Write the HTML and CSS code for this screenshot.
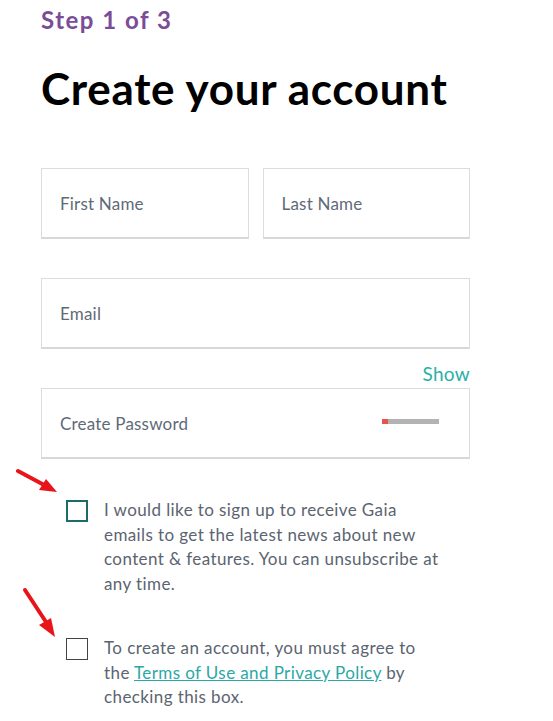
FILE: index.html
```html
<!DOCTYPE html>
<html>
<head>
<meta charset="utf-8">
<link rel="stylesheet" href="styles.css">
</head>
<body>
<div class="page">
  <div class="step">Step 1 of 3</div>
  <h1 class="title">Create your account</h1>
  <div class="row">
    <div class="field"><span class="ph">First Name</span></div>
    <div class="field"><span class="ph">Last Name</span></div>
  </div>
  <div class="field email"><span class="ph">Email</span></div>
  <div class="show">Show</div>
  <div class="field pass">
    <span class="ph">Create Password</span>
    <span class="meter"><span class="meter-fill"></span></span>
  </div>
  <div class="check-row first">
    <span class="box teal"></span>
    <p class="check-text">I would like to sign up to receive Gaia emails to get the latest news about new content &amp; features. You can unsubscribe at any time.</p>
    <svg class="arrow arrow1" width="50" height="40" viewBox="0 0 50 40"><line x1="2" y1="3" x2="30" y2="18" stroke="#e8141a" stroke-width="4" stroke-linecap="round"/><polygon points="41,24 23,22 30,11" fill="#e8141a"/></svg>
  </div>
  <div class="check-row second">
    <span class="box"></span>
    <p class="check-text">To create an account, you must agree to the <a class="link" href="#">Terms of Use and Privacy Policy</a> by checking this box.</p>
    <svg class="arrow arrow2" width="40" height="55" viewBox="0 0 40 55"><line x1="3" y1="3" x2="24" y2="35" stroke="#e8141a" stroke-width="4" stroke-linecap="round"/><polygon points="33,50 17,38 29,31" fill="#e8141a"/></svg>
  </div>
</div>
</body>
</html>
```
FILE: styles.css
```css
html, body {
  margin: 0;
  padding: 0;
  background: #fff;
}
body {
  font-family: Lato, "Open Sans", sans-serif;
}
.page {
  width: 429px;
  padding: 6px 0 0 41px;
}
.step {
  font-size: 24px;
  font-weight: 700;
  color: #7b4c97;
  line-height: 28px;
  letter-spacing: 1.5px;
}
.title {
  margin: 28px 0 0;
  font-size: 44px;
  font-weight: 700;
  color: #000;
  line-height: 52px;
  letter-spacing: 0.7px;
}
.row {
  display: flex;
  gap: 14px;
  margin-top: 54px;
}
.row .field {
  flex: 1;
}
.field {
  box-sizing: border-box;
  height: 71px;
  border: 1px solid #dcdcdc;
  border-bottom: 2px solid #d6d8dc;
  display: flex;
  align-items: center;
  padding: 0 18px;
  background: #fff;
}
.ph {
  font-size: 17px;
  color: #5f6a78;
  letter-spacing: 0.2px;
  padding-top: 1px;
}
.email {
  margin-top: 39px;
  height: 71px;
}
.show {
  text-align: right;
  font-size: 19px;
  color: #2bb0a8;
  line-height: 24px;
  margin-top: 13px;
  letter-spacing: 0.3px;
}
.pass {
  margin-top: 2px;
  justify-content: space-between;
  padding-right: 30px;
}
.meter {
  width: 57px;
  height: 5px;
  background: #b3b3b3;
  display: flex;
  margin-top: -3px;
}
.meter-fill {
  width: 6px;
  background: #e8534e;
}
.check-row {
  position: relative;
  display: flex;
  gap: 16px;
  padding-left: 25px;
}
.check-row.first {
  margin-top: 40px;
}
.check-row.second {
  margin-top: 41px;
}
.box {
  flex: none;
  box-sizing: border-box;
  width: 22px;
  height: 22px;
  border: 1.5px solid #444;
  margin-top: 1px;
}
.box.teal {
  border: 2px solid #1f6b6a;
}
.check-text {
  margin: -1px 0 0;
  font-size: 17px;
  line-height: 24.5px;
  color: #5b6470;
  width: 342px;
  letter-spacing: 0.4px;
}
.link {
  color: #2ba8a3;
  text-decoration: underline;
}
.arrow {
  position: absolute;
}
.arrow1 {
  left: -25px;
  top: -31px;
}
.arrow2 {
  left: -19px;
  top: -50px;
}
```
